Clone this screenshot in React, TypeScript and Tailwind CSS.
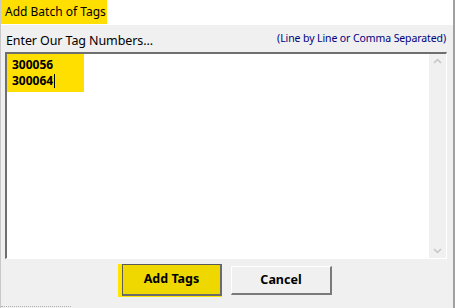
import React from "react";

export default function App() {
  const font = { fontFamily: '"Noto Sans", "Open Sans", sans-serif' };
  return (
    <div
      className="relative w-[455px] h-[308px] bg-[#f0f0f0] flex flex-col overflow-hidden border-r-2 border-[#a0a0a0] border-l border-l-[#c8c8c8]"
      style={font}
    >
      {/* Title bar */}
      <div className="h-[25px] bg-white flex items-stretch shrink-0">
        <div className="bg-[#ffdf00] w-[106px] h-[24px] flex items-center pl-[4px] text-[12px] text-black leading-none whitespace-nowrap">
          Add Batch of Tags
        </div>
      </div>

      {/* Label row */}
      <div className="flex items-end justify-between pl-[5px] pr-[7px] h-[22px] shrink-0">
        <span className="text-[12.5px] text-black leading-none tracking-[-0.1px] whitespace-nowrap">Enter Our Tag Numbers...</span>
        <span className="text-[10.5px] text-[#000080] leading-none mb-[4px] tracking-[-0.1px] whitespace-nowrap">(Line by Line or Comma Separated)</span>
      </div>

      {/* Textarea */}
      <div className="mt-[5px] ml-[4px] w-[442px] h-[207px] border-t-2 border-l-2 border-t-[#6f6f6f] border-l-[#6f6f6f] border-b border-r border-b-white border-r-white bg-white flex shrink-0">
        <div className="flex-1 relative">
          <div className="absolute left-0 top-0 w-[77px] h-[38px] bg-[#ffdf00]" />
          <div className="relative pl-[5px] pt-[3px] text-[12px] font-bold text-black leading-[16px]">
            <div>300056</div>
            <div className="flex items-center">
              300064<span className="inline-block w-[1px] h-[14px] bg-black ml-[1px]" />
            </div>
          </div>
        </div>
        <div className="w-[17px] bg-[#f0f0f0] flex flex-col justify-between items-center py-[4px]">
          <svg width="9" height="6" viewBox="0 0 9 6">
            <path d="M1 5 L4.5 1.5 L8 5" fill="none" stroke="#c4c4c4" strokeWidth="1.5" />
          </svg>
          <svg width="9" height="6" viewBox="0 0 9 6">
            <path d="M1 1 L4.5 4.5 L8 1" fill="none" stroke="#c4c4c4" strokeWidth="1.5" />
          </svg>
        </div>
      </div>

      {/* Buttons */}
      <div className="flex items-start pl-[117px] pt-[5px] gap-[9px]">
        <div className="bg-[#ffe600] pl-[4px] h-[33px] flex">
          <button className="w-[100px] h-[32px] bg-[#eed800] border border-[#5a5a5a] border-b-2 border-r-2 border-b-[#6b6b6b] border-r-[#6b6b6b] text-[12.5px] font-bold text-black flex items-center justify-center">
            Add Tags
          </button>
        </div>
        <button className="mt-[2px] w-[101px] h-[29px] bg-[#f0f0f0] border-t border-l border-t-white border-l-white border-b-2 border-r-2 border-b-[#7a7a7a] border-r-[#7a7a7a] text-[12.5px] font-bold text-black flex items-center justify-center">
          Cancel
        </button>
      </div>

      {/* faint residue at bottom-left */}
      <div className="absolute left-0 bottom-[1px] w-[70px] h-[2px] border-b border-dotted border-[#b0b0b0]" />
    </div>
  );
}
